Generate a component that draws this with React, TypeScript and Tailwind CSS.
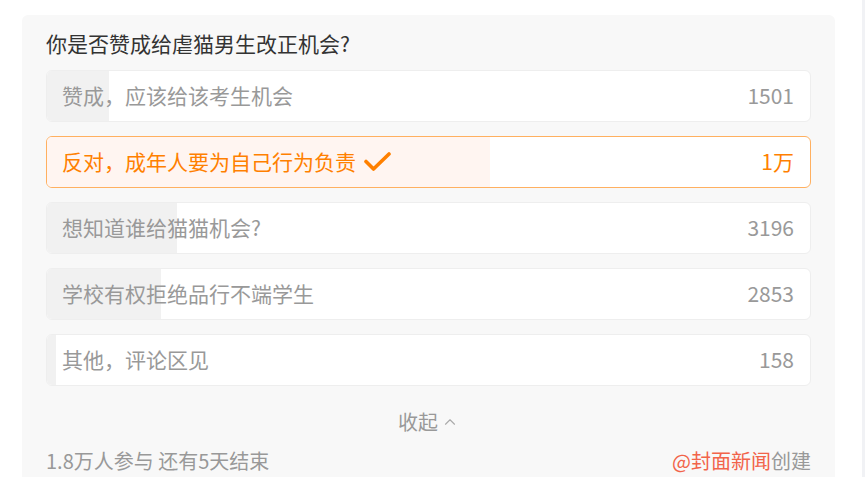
import React from 'react';
import { ChevronUp } from 'lucide-react';

const options = [
  { label: '赞成，应该给该考生机会', count: '1501', pct: 8.1, picked: false },
  { label: '反对，成年人要为自己行为负责', count: '1万', pct: 58, picked: true },
  { label: '想知道谁给猫猫机会?', count: '3196', pct: 17.1, picked: false },
  { label: '学校有权拒绝品行不端学生', count: '2853', pct: 15, picked: false },
  { label: '其他，评论区见', count: '158', pct: 1.2, picked: false },
];

function Check() {
  return (
    <svg width="27" height="20" viewBox="0 0 27 20" className="ml-[8px] shrink-0">
      <path d="M2 9.5 L9.5 17 L25 2" fill="none" stroke="#ff8000" strokeWidth="3.6" strokeLinecap="round" strokeLinejoin="round" />
    </svg>
  );
}

export default function App() {
  return (
    <div className="w-[865px] h-[477px] bg-white flex overflow-hidden" style={{ fontFamily: '"Noto Sans CJK SC", "Microsoft YaHei", sans-serif' }}>
      <div className="pl-[22px] pt-[15px]">
        <div className="w-[813px] h-[470px] bg-[#f8f8f8] rounded-t-[6px] px-[24px] pt-[14px]">
          <h1 className="text-[21px] leading-[28px] text-[#333333] mb-[13px] font-normal">你是否赞成给虐猫男生改正机会?</h1>

          <div className="flex flex-col gap-[14px]">
            {options.map((o) => (
              <div
                key={o.label}
                className={`relative h-[52px] rounded-[6px] border overflow-hidden bg-white ${
                  o.picked ? 'border-[#ffb060]' : 'border-[#eeeeee]'
                }`}
              >
                <div
                  className={`absolute left-0 top-0 bottom-0 ${o.picked ? 'bg-[#fff5f1]' : 'bg-[#f1f1f1]'}`}
                  style={{ width: `${o.pct}%` }}
                />
                <div className="relative h-full flex items-center justify-between pl-[15px] pr-[16px]">
                  <div className={`flex items-center text-[21px] ${o.picked ? 'text-[#ff8000]' : 'text-[#999999]'}`}>
                    {o.label}
                    {o.picked && <Check />}
                  </div>
                  <span className={`text-[21px] ${o.picked ? 'text-[#ff8000]' : 'text-[#999999]'}`}>{o.count}</span>
                </div>
              </div>
            ))}
          </div>

          <div className="mt-[22px] h-[28px] flex items-center justify-center text-[20px] text-[#999999]">
            收起
            <ChevronUp size={18} strokeWidth={1.5} className="ml-[3px] text-[#aaaaaa]" />
          </div>

          <div className="mt-[11px] h-[28px] flex items-center justify-between text-[20px]">
            <span className="text-[#999999]">1.8万人参与 还有5天结束</span>
            <span>
              <span className="text-[#f2644a]">@封面新闻</span>
              <span className="text-[#999999]">创建</span>
            </span>
          </div>
        </div>
      </div>
      <div className="flex-1" />
      <div className="w-[3px] bg-[#f1f2f5]" />
    </div>
  );
}
